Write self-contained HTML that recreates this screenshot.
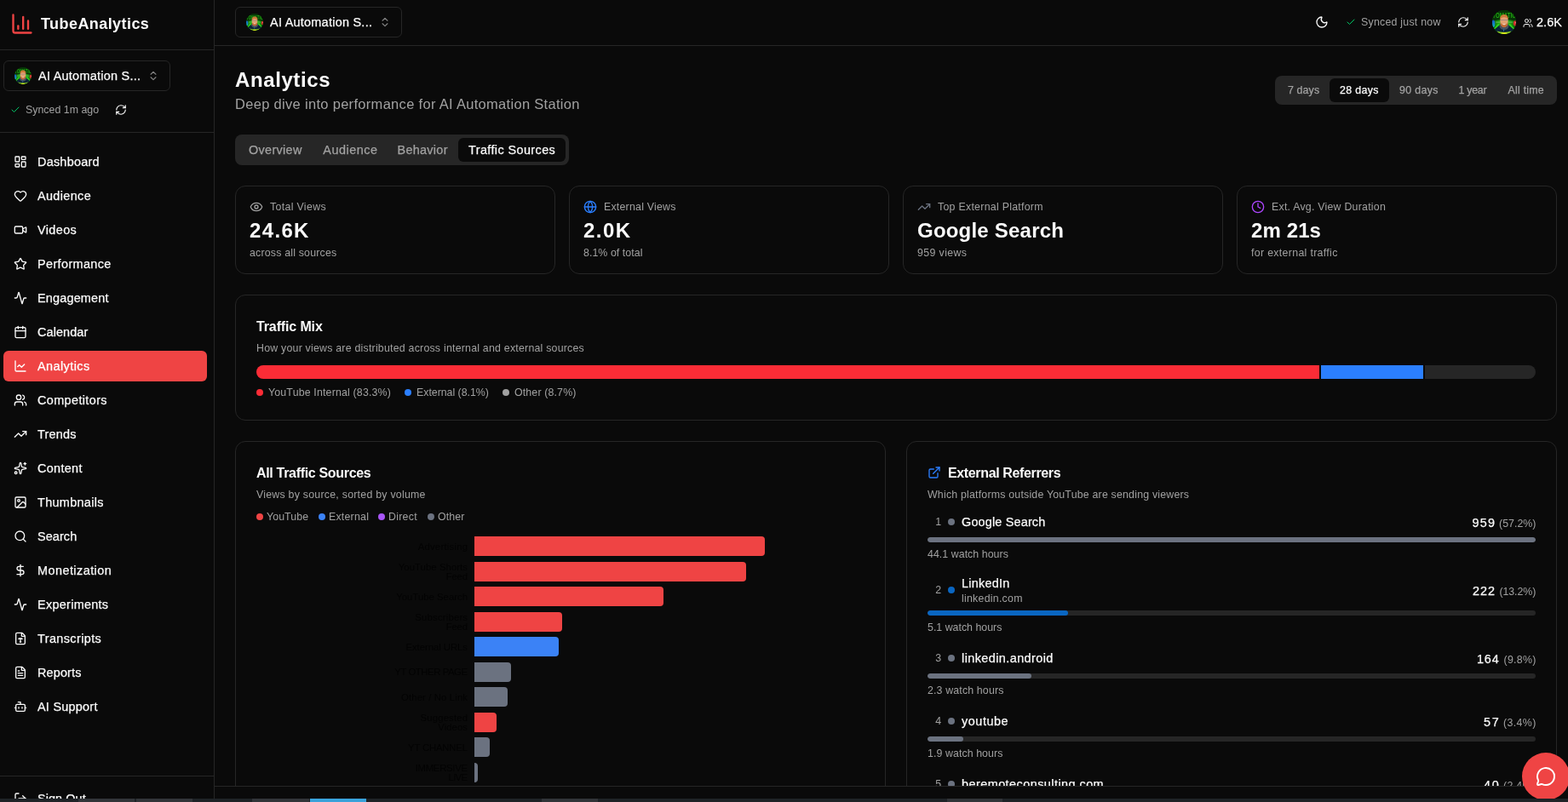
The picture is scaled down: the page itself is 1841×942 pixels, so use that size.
<!DOCTYPE html>
<html lang="en">
<head>
<meta charset="utf-8">
<title>TubeAnalytics – Analytics</title>
<meta name="viewport" content="width=1841">
<style>
*{margin:0;padding:0;box-sizing:border-box}
html,body{width:1841px;height:942px;overflow:hidden;background:#0a0a0a}
body{font-family:"Liberation Sans",Arial,sans-serif;color:#fafafa}
.app,.app *{position:absolute}
.app{overflow:hidden;will-change:transform}
.t{white-space:nowrap;line-height:1;font-weight:400;background:none;border:0;font-family:inherit}
h1.t,h2.t,h3.t{font-weight:700}
.btn{color:inherit;cursor:pointer}
.i{display:block;overflow:visible}
a{color:inherit;text-decoration:none}
button{font-family:inherit;color:inherit;background:none;border:0}
.select{border:1px solid #262626;border-radius:6px;background:#0a0a0a}
.navitem{border-radius:6px}
.navitem.active{background:#ef4444}
.seg{background:#262626;border-radius:8px}
.card{border:1px solid #262626;border-radius:12px;background:#0a0a0a}
.mixbar{border-radius:8px;overflow:hidden}
.track{background:#262626;border-radius:3px;overflow:hidden}
.fab{background:#ef4444;border-radius:50%}
.strip{background:#1f2327}
</style>
</head>
<body>
<div class="app" style="left:0px;top:0px;width:1841px;height:942px;">
 <aside class="sidebar" style="left:0px;top:0px;width:252px;height:938px;">
  <div class="a" style="left:251px;top:0px;width:1px;height:938px;background:#262626;"></div>
  <div class="brand" style="left:0px;top:0px;width:251px;height:59px;">
   <div class="a" style="left:0px;top:58px;width:251px;height:1px;background:#262626;"></div>
   <svg class="i" width="28" height="28" viewBox="0 0 24 24" fill="none" stroke="#ef4444" stroke-width="2" stroke-linecap="round" stroke-linejoin="round" style="left:12px;top:14px;"><path d="M3 3v16a2 2 0 0 0 2 2h16"/><path d="M18 17V9"/><path d="M13 17V5"/><path d="M8 17v-3"/></svg>
   <h1 class="t" style="top:19px;font-size:18px;left:48px;font-weight:700;letter-spacing:0.43px;">TubeAnalytics</h1>
  </div>
  <div class="channel" style="left:0px;top:59px;width:251px;height:97px;">
   <div class="a" style="left:0px;top:96px;width:251px;height:1px;background:#262626;"></div>
   <button class="select" style="left:4px;top:12px;width:196px;height:36px;">
    <svg class="i" width="20" height="20" viewBox="0 0 28 28" style="left:12px;top:7px;" role="img" aria-label="AI Automation Station"><defs><clipPath id="av1"><circle cx="14" cy="14" r="14"/></clipPath><radialGradient id="ag1" cx="50%" cy="58%" r="62%"><stop offset="0" stop-color="#35d61c"/><stop offset="0.45" stop-color="#1c9a10"/><stop offset="0.8" stop-color="#0c5a08"/><stop offset="1" stop-color="#063405"/></radialGradient><linearGradient id="ab1" x1="0" y1="0" x2="0" y2="1"><stop offset="0" stop-color="#1450c8"/><stop offset="1" stop-color="#12b4c8"/></linearGradient></defs><g clip-path="url(#av1)"><rect width="28" height="28" fill="url(#ag1)"/><path d="M0 0h28v12.500Q14 9.500 0 12.500Z" fill="#073407"/><text x="14" y="9.200" text-anchor="middle" font-family="Liberation Sans, Arial, sans-serif" font-weight="700" font-size="6.400" textLength="27.500" lengthAdjust="spacingAndGlyphs" fill="#22a812" transform="translate(0 -4.600) scale(1 1.500)">TOMATIC</text><path d="M4.200 14.100h5M19 14.100h5.200" stroke="#a4d3a0" stroke-width="1" opacity="0.550"/><path d="M7 15.800 L2 21.600 L3.600 22.600 L8.800 17Z" fill="#2fd41e"/><path d="M21 15.800 L26 21.600 L24.400 22.600 L19.200 17Z" fill="#2fd41e"/><ellipse cx="1.200" cy="15.700" rx="2.100" ry="4.200" fill="url(#ab1)"/><ellipse cx="27" cy="15.300" rx="2.200" ry="3.100" fill="#d42e2c"/><circle cx="27.300" cy="14.800" r="0.600" fill="#f6c8c8"/><path d="M9.500 17 L3 22.300 L4 25.500 Q14 28.500 24 25.500 L25 22.300 L18.500 17Z" fill="#0a2338"/><path d="M8.500 19 Q8.700 16.400 10.300 16 L17.700 16 Q19.300 16.400 19.500 19 Q18.500 23 14 23 Q9.500 23 8.500 19Z" fill="#4a525c"/><ellipse cx="14" cy="12.700" rx="4.700" ry="7.300" fill="#e2a273"/><path d="M9.200 11.500 Q8.800 4.800 14 5 Q19.200 4.800 18.800 11.500 Q17.800 8.200 14 8.300 Q10.200 8.200 9.200 11.500Z" fill="#cf7a3a"/><path d="M9.500 14.500 Q9.800 20 14 20.200 Q18.200 20 18.500 14.500 Q16.600 17.200 14 17.200 Q11.400 17.200 9.500 14.500Z" fill="#c26a34"/><path d="M9.500 11.400h9" stroke="#6a6f8a" stroke-width="0.700" opacity="0.800"/><ellipse cx="14" cy="16.500" rx="1.500" ry="0.800" fill="#eed2c4"/><path d="M13.500 21.500v3.500" stroke="#2d6690" stroke-width="1"/><path d="M5.500 24.600 Q14 27.300 22.500 24.600 Q21 28.500 14 28.500 Q7 28.500 5.500 24.600Z" fill="#8fcc1e"/><ellipse cx="14" cy="27" rx="3.500" ry="0.900" fill="#dfe81c"/></g></svg>
    <span class="t" style="top:10px;font-size:14.42px;left:40px;-webkit-text-stroke:0.25px;letter-spacing:0.28px;">AI Automation S...</span>
    <svg class="i" width="14" height="14" viewBox="0 0 24 24" fill="none" stroke="#fafafa" stroke-width="2" stroke-linecap="round" stroke-linejoin="round" style="left:168px;top:10px;opacity:0.5;"><path d="m7 15 5 5 5-5"/><path d="m7 9 5-5 5 5"/></svg>
   </button>
   <svg class="i" width="12" height="12" viewBox="0 0 24 24" fill="none" stroke="#00c86a" stroke-width="2" stroke-linecap="round" stroke-linejoin="round" style="left:12px;top:64px;"><path d="M20 6 9 17l-5-5"/></svg>
   <span class="t" style="top:64px;font-size:12.36px;left:30px;color:#a1a1a1;letter-spacing:0.02px;">Synced 1m ago</span>
   <svg class="i" width="14" height="14" viewBox="0 0 24 24" fill="none" stroke="#fafafa" stroke-width="2" stroke-linecap="round" stroke-linejoin="round" style="left:135px;top:63px;"><path d="M3 12a9 9 0 0 1 9-9 9.75 9.75 0 0 1 6.74 2.74L21 8"/><path d="M21 3v5h-5"/><path d="M21 12a9 9 0 0 1-9 9 9.75 9.75 0 0 1-6.74-2.74L3 16"/><path d="M8 16H3v5"/></svg>
  </div>
  <nav class="nav" style="left:0px;top:156px;width:251px;height:755px;">
   <a class="navitem" style="left:4px;top:16px;width:239px;height:36px;">
    <svg class="i" width="16" height="16" viewBox="0 0 24 24" fill="none" stroke="#fafafa" stroke-width="2" stroke-linecap="round" stroke-linejoin="round" style="left:12px;top:10px;"><rect width="7" height="9" x="3" y="3" rx="1"/><rect width="7" height="5" x="14" y="3" rx="1"/><rect width="7" height="9" x="14" y="12" rx="1"/><rect width="7" height="5" x="3" y="16" rx="1"/></svg>
    <span class="t" style="top:11px;font-size:14.42px;left:40px;-webkit-text-stroke:0.25px;letter-spacing:0.25px;">Dashboard</span>
   </a>
   <a class="navitem" style="left:4px;top:56px;width:239px;height:36px;">
    <svg class="i" width="16" height="16" viewBox="0 0 24 24" fill="none" stroke="#fafafa" stroke-width="2" stroke-linecap="round" stroke-linejoin="round" style="left:12px;top:10px;"><path d="M2 9.500a5.500 5.500 0 0 1 9.591-3.676.560.560 0 0 0 .818 0A5.490 5.490 0 0 1 22 9.500c0 2.290-1.500 4-3 5.500l-5.492 5.313a2 2 0 0 1-3 .019L5 15c-1.500-1.500-3-3.200-3-5.500"/></svg>
    <span class="t" style="top:11px;font-size:14.42px;left:40px;-webkit-text-stroke:0.25px;letter-spacing:0.37px;">Audience</span>
   </a>
   <a class="navitem" style="left:4px;top:96px;width:239px;height:36px;">
    <svg class="i" width="16" height="16" viewBox="0 0 24 24" fill="none" stroke="#fafafa" stroke-width="2" stroke-linecap="round" stroke-linejoin="round" style="left:12px;top:10px;"><path d="m16 13 5.223 3.482a.5.5 0 0 0 .777-.416V7.870a.5.5 0 0 0-.752-.432L16 10.500"/><rect x="2" y="6" width="14" height="12" rx="2"/></svg>
    <span class="t" style="top:11px;font-size:14.42px;left:40px;-webkit-text-stroke:0.25px;letter-spacing:0.39px;">Videos</span>
   </a>
   <a class="navitem" style="left:4px;top:136px;width:239px;height:36px;">
    <svg class="i" width="16" height="16" viewBox="0 0 24 24" fill="none" stroke="#fafafa" stroke-width="2" stroke-linecap="round" stroke-linejoin="round" style="left:12px;top:10px;"><path d="M11.525 2.295a.53.53 0 0 1 .95 0l2.310 4.679a2.123 2.123 0 0 0 1.595 1.160l5.166.756a.53.53 0 0 1 .294.904l-3.736 3.638a2.123 2.123 0 0 0-.611 1.878l.882 5.140a.53.53 0 0 1-.771.560l-4.618-2.428a2.122 2.122 0 0 0-1.973 0L6.396 21.010a.53.53 0 0 1-.770-.560l.881-5.139a2.122 2.122 0 0 0-.611-1.879L2.160 9.795a.53.53 0 0 1 .294-.906l5.165-.755a2.122 2.122 0 0 0 1.597-1.160z"/></svg>
    <span class="t" style="top:11px;font-size:14.42px;left:40px;-webkit-text-stroke:0.25px;letter-spacing:0.39px;">Performance</span>
   </a>
   <a class="navitem" style="left:4px;top:176px;width:239px;height:36px;">
    <svg class="i" width="16" height="16" viewBox="0 0 24 24" fill="none" stroke="#fafafa" stroke-width="2" stroke-linecap="round" stroke-linejoin="round" style="left:12px;top:10px;"><path d="M22 12h-2.480a2 2 0 0 0-1.930 1.460l-2.350 8.360a.25.25 0 0 1-.480 0L9.240 2.180a.25.25 0 0 0-.480 0l-2.350 8.360A2 2 0 0 1 4.490 12H2"/></svg>
    <span class="t" style="top:11px;font-size:14.42px;left:40px;-webkit-text-stroke:0.25px;letter-spacing:0.2px;">Engagement</span>
   </a>
   <a class="navitem" style="left:4px;top:216px;width:239px;height:36px;">
    <svg class="i" width="16" height="16" viewBox="0 0 24 24" fill="none" stroke="#fafafa" stroke-width="2" stroke-linecap="round" stroke-linejoin="round" style="left:12px;top:10px;"><path d="M8 2v4"/><path d="M16 2v4"/><rect width="18" height="18" x="3" y="4" rx="2"/><path d="M3 10h18"/></svg>
    <span class="t" style="top:11px;font-size:14.42px;left:40px;-webkit-text-stroke:0.25px;letter-spacing:0.11px;">Calendar</span>
   </a>
   <a class="navitem active" style="left:4px;top:256px;width:239px;height:36px;">
    <svg class="i" width="16" height="16" viewBox="0 0 24 24" fill="none" stroke="#ffffff" stroke-width="2" stroke-linecap="round" stroke-linejoin="round" style="left:12px;top:10px;"><path d="M3 3v16a2 2 0 0 0 2 2h16"/><path d="m19 9-5 5-4-4-3 3"/></svg>
    <span class="t" style="top:11px;font-size:14.42px;left:40px;-webkit-text-stroke:0.25px;color:#ffffff;letter-spacing:0.44px;">Analytics</span>
   </a>
   <a class="navitem" style="left:4px;top:296px;width:239px;height:36px;">
    <svg class="i" width="16" height="16" viewBox="0 0 24 24" fill="none" stroke="#fafafa" stroke-width="2" stroke-linecap="round" stroke-linejoin="round" style="left:12px;top:10px;"><path d="M16 21v-2a4 4 0 0 0-4-4H6a4 4 0 0 0-4 4v2"/><path d="M16 3.128a4 4 0 0 1 0 7.744"/><path d="M22 21v-2a4 4 0 0 0-3-3.870"/><circle cx="9" cy="7" r="4"/></svg>
    <span class="t" style="top:11px;font-size:14.42px;left:40px;-webkit-text-stroke:0.25px;letter-spacing:0.39px;">Competitors</span>
   </a>
   <a class="navitem" style="left:4px;top:336px;width:239px;height:36px;">
    <svg class="i" width="16" height="16" viewBox="0 0 24 24" fill="none" stroke="#fafafa" stroke-width="2" stroke-linecap="round" stroke-linejoin="round" style="left:12px;top:10px;"><polyline points="22 7 13.500 15.500 8.500 10.500 2 17"/><polyline points="16 7 22 7 22 13"/></svg>
    <span class="t" style="top:11px;font-size:14.42px;left:40px;-webkit-text-stroke:0.25px;letter-spacing:0.23px;">Trends</span>
   </a>
   <a class="navitem" style="left:4px;top:376px;width:239px;height:36px;">
    <svg class="i" width="16" height="16" viewBox="0 0 24 24" fill="none" stroke="#fafafa" stroke-width="2" stroke-linecap="round" stroke-linejoin="round" style="left:12px;top:10px;"><path d="M11.017 2.814a1 1 0 0 1 1.966 0l1.051 5.558a2 2 0 0 0 1.594 1.594l5.558 1.051a1 1 0 0 1 0 1.966l-5.558 1.051a2 2 0 0 0-1.594 1.594l-1.051 5.558a1 1 0 0 1-1.966 0l-1.051-5.558a2 2 0 0 0-1.594-1.594l-5.558-1.051a1 1 0 0 1 0-1.966l5.558-1.051a2 2 0 0 0 1.594-1.594z"/><path d="M20 2v4"/><path d="M22 4h-4"/><circle cx="4" cy="20" r="2"/></svg>
    <span class="t" style="top:11px;font-size:14.42px;left:40px;-webkit-text-stroke:0.25px;letter-spacing:0.33px;">Content</span>
   </a>
   <a class="navitem" style="left:4px;top:416px;width:239px;height:36px;">
    <svg class="i" width="16" height="16" viewBox="0 0 24 24" fill="none" stroke="#fafafa" stroke-width="2" stroke-linecap="round" stroke-linejoin="round" style="left:12px;top:10px;"><rect width="18" height="18" x="3" y="3" rx="2" ry="2"/><circle cx="9" cy="9" r="2"/><path d="m21 15-3.086-3.086a2 2 0 0 0-2.828 0L6 21"/></svg>
    <span class="t" style="top:11px;font-size:14.42px;left:40px;-webkit-text-stroke:0.25px;letter-spacing:0.33px;">Thumbnails</span>
   </a>
   <a class="navitem" style="left:4px;top:456px;width:239px;height:36px;">
    <svg class="i" width="16" height="16" viewBox="0 0 24 24" fill="none" stroke="#fafafa" stroke-width="2" stroke-linecap="round" stroke-linejoin="round" style="left:12px;top:10px;"><circle cx="11" cy="11" r="8"/><path d="m21 21-4.300-4.300"/></svg>
    <span class="t" style="top:11px;font-size:14.42px;left:40px;-webkit-text-stroke:0.25px;letter-spacing:0.11px;">Search</span>
   </a>
   <a class="navitem" style="left:4px;top:496px;width:239px;height:36px;">
    <svg class="i" width="16" height="16" viewBox="0 0 24 24" fill="none" stroke="#fafafa" stroke-width="2" stroke-linecap="round" stroke-linejoin="round" style="left:12px;top:10px;"><line x1="12" x2="12" y1="2" y2="22"/><path d="M17 5H9.500a3.500 3.500 0 0 0 0 7h5a3.500 3.500 0 0 1 0 7H6"/></svg>
    <span class="t" style="top:11px;font-size:14.42px;left:40px;-webkit-text-stroke:0.25px;letter-spacing:0.46px;">Monetization</span>
   </a>
   <a class="navitem" style="left:4px;top:536px;width:239px;height:36px;">
    <svg class="i" width="16" height="16" viewBox="0 0 24 24" fill="none" stroke="#fafafa" stroke-width="2" stroke-linecap="round" stroke-linejoin="round" style="left:12px;top:10px;"><path d="M22 12h-2.480a2 2 0 0 0-1.930 1.460l-2.350 8.360a.25.25 0 0 1-.480 0L9.240 2.180a.25.25 0 0 0-.480 0l-2.350 8.360A2 2 0 0 1 4.490 12H2"/></svg>
    <span class="t" style="top:11px;font-size:14.42px;left:40px;-webkit-text-stroke:0.25px;letter-spacing:0.3px;">Experiments</span>
   </a>
   <a class="navitem" style="left:4px;top:576px;width:239px;height:36px;">
    <svg class="i" width="16" height="16" viewBox="0 0 24 24" fill="none" stroke="#fafafa" stroke-width="2" stroke-linecap="round" stroke-linejoin="round" style="left:12px;top:10px;"><path d="M6 22a2 2 0 0 1-2-2V4a2 2 0 0 1 2-2h8a2.400 2.400 0 0 1 1.704.706l3.588 3.588A2.400 2.400 0 0 1 20 8v12a2 2 0 0 1-2 2z"/><path d="M14 2v5a1 1 0 0 0 1 1h5"/><path d="M11 18h2"/><path d="M12 12v6"/><path d="M9 13v-.500a.500.500 0 0 1 .500-.500h5a.500.500 0 0 1 .500.500v.500"/></svg>
    <span class="t" style="top:11px;font-size:14.42px;left:40px;-webkit-text-stroke:0.25px;letter-spacing:0.41px;">Transcripts</span>
   </a>
   <a class="navitem" style="left:4px;top:616px;width:239px;height:36px;">
    <svg class="i" width="16" height="16" viewBox="0 0 24 24" fill="none" stroke="#fafafa" stroke-width="2" stroke-linecap="round" stroke-linejoin="round" style="left:12px;top:10px;"><path d="M6 22a2 2 0 0 1-2-2V4a2 2 0 0 1 2-2h8a2.400 2.400 0 0 1 1.704.706l3.588 3.588A2.400 2.400 0 0 1 20 8v12a2 2 0 0 1-2 2z"/><path d="M14 2v5a1 1 0 0 0 1 1h5"/><path d="M10 9H8"/><path d="M16 13H8"/><path d="M16 17H8"/></svg>
    <span class="t" style="top:11px;font-size:14.42px;left:40px;-webkit-text-stroke:0.25px;letter-spacing:0.17px;">Reports</span>
   </a>
   <a class="navitem" style="left:4px;top:656px;width:239px;height:36px;">
    <svg class="i" width="16" height="16" viewBox="0 0 24 24" fill="none" stroke="#fafafa" stroke-width="2" stroke-linecap="round" stroke-linejoin="round" style="left:12px;top:10px;"><path d="M12 8V4H8"/><rect width="16" height="12" x="4" y="8" rx="2"/><path d="M2 14h2"/><path d="M20 14h2"/><path d="M15 13v2"/><path d="M9 13v2"/></svg>
    <span class="t" style="top:11px;font-size:14.42px;left:40px;-webkit-text-stroke:0.25px;letter-spacing:0.26px;">AI Support</span>
   </a>
  </nav>
  <div class="sidefoot" style="left:0px;top:911px;width:251px;height:27px;overflow:hidden;">
   <div class="a" style="left:0px;top:0px;width:251px;height:1px;background:#262626;"></div>
   <a class="navitem" style="left:4px;top:9px;width:239px;height:36px;">
    <svg class="i" width="16" height="16" viewBox="0 0 24 24" fill="none" stroke="#fafafa" stroke-width="2" stroke-linecap="round" stroke-linejoin="round" style="left:12px;top:10px;"><path d="M9 21H5a2 2 0 0 1-2-2V5a2 2 0 0 1 2-2h4"/><polyline points="16 17 21 12 16 7"/><line x1="21" x2="9" y1="12" y2="12"/></svg>
    <span class="t" style="top:11px;font-size:14.42px;left:40px;-webkit-text-stroke:0.25px;letter-spacing:0.09px;">Sign Out</span>
   </a>
  </div>
 </aside>
 <header class="topbar" style="left:252px;top:0px;width:1589px;height:54px;">
  <div class="a" style="left:0px;top:53px;width:1589px;height:1px;background:#262626;"></div>
  <button class="select" style="left:24px;top:8px;width:196px;height:36px;">
   <svg class="i" width="20" height="20" viewBox="0 0 28 28" style="left:12px;top:7px;" role="img" aria-label="AI Automation Station"><defs><clipPath id="av2"><circle cx="14" cy="14" r="14"/></clipPath><radialGradient id="ag2" cx="50%" cy="58%" r="62%"><stop offset="0" stop-color="#35d61c"/><stop offset="0.45" stop-color="#1c9a10"/><stop offset="0.8" stop-color="#0c5a08"/><stop offset="1" stop-color="#063405"/></radialGradient><linearGradient id="ab2" x1="0" y1="0" x2="0" y2="1"><stop offset="0" stop-color="#1450c8"/><stop offset="1" stop-color="#12b4c8"/></linearGradient></defs><g clip-path="url(#av2)"><rect width="28" height="28" fill="url(#ag2)"/><path d="M0 0h28v12.500Q14 9.500 0 12.500Z" fill="#073407"/><text x="14" y="9.200" text-anchor="middle" font-family="Liberation Sans, Arial, sans-serif" font-weight="700" font-size="6.400" textLength="27.500" lengthAdjust="spacingAndGlyphs" fill="#22a812" transform="translate(0 -4.600) scale(1 1.500)">TOMATIC</text><path d="M4.200 14.100h5M19 14.100h5.200" stroke="#a4d3a0" stroke-width="1" opacity="0.550"/><path d="M7 15.800 L2 21.600 L3.600 22.600 L8.800 17Z" fill="#2fd41e"/><path d="M21 15.800 L26 21.600 L24.400 22.600 L19.200 17Z" fill="#2fd41e"/><ellipse cx="1.200" cy="15.700" rx="2.100" ry="4.200" fill="url(#ab2)"/><ellipse cx="27" cy="15.300" rx="2.200" ry="3.100" fill="#d42e2c"/><circle cx="27.300" cy="14.800" r="0.600" fill="#f6c8c8"/><path d="M9.500 17 L3 22.300 L4 25.500 Q14 28.500 24 25.500 L25 22.300 L18.500 17Z" fill="#0a2338"/><path d="M8.500 19 Q8.700 16.400 10.300 16 L17.700 16 Q19.300 16.400 19.500 19 Q18.500 23 14 23 Q9.500 23 8.500 19Z" fill="#4a525c"/><ellipse cx="14" cy="12.700" rx="4.700" ry="7.300" fill="#e2a273"/><path d="M9.200 11.500 Q8.800 4.800 14 5 Q19.200 4.800 18.800 11.500 Q17.800 8.200 14 8.300 Q10.200 8.200 9.200 11.500Z" fill="#cf7a3a"/><path d="M9.500 14.500 Q9.800 20 14 20.200 Q18.200 20 18.500 14.500 Q16.600 17.200 14 17.200 Q11.400 17.200 9.500 14.500Z" fill="#c26a34"/><path d="M9.500 11.400h9" stroke="#6a6f8a" stroke-width="0.700" opacity="0.800"/><ellipse cx="14" cy="16.500" rx="1.500" ry="0.800" fill="#eed2c4"/><path d="M13.500 21.500v3.500" stroke="#2d6690" stroke-width="1"/><path d="M5.500 24.600 Q14 27.300 22.500 24.600 Q21 28.500 14 28.500 Q7 28.500 5.500 24.600Z" fill="#8fcc1e"/><ellipse cx="14" cy="27" rx="3.500" ry="0.900" fill="#dfe81c"/></g></svg>
   <span class="t" style="top:10px;font-size:14.42px;left:40px;-webkit-text-stroke:0.25px;letter-spacing:0.27px;">AI Automation S...</span>
   <svg class="i" width="14" height="14" viewBox="0 0 24 24" fill="none" stroke="#fafafa" stroke-width="2" stroke-linecap="round" stroke-linejoin="round" style="left:168px;top:10px;opacity:0.5;"><path d="m7 15 5 5 5-5"/><path d="m7 9 5-5 5 5"/></svg>
  </button>
  <svg class="i" width="16" height="16" viewBox="0 0 24 24" fill="none" stroke="#fafafa" stroke-width="2" stroke-linecap="round" stroke-linejoin="round" style="left:1292px;top:18px;"><path d="M20.985 12.486a9 9 0 1 1-9.473-9.472c.405-.022.617.460.402.803a6 6 0 0 0 8.268 8.268c.344-.215.825-.004.803.401"/></svg>
  <svg class="i" width="12" height="12" viewBox="0 0 24 24" fill="none" stroke="#00c86a" stroke-width="2" stroke-linecap="round" stroke-linejoin="round" style="left:1328px;top:20px;"><path d="M20 6 9 17l-5-5"/></svg>
  <span class="t" style="top:20px;font-size:12.36px;left:1346px;color:#a1a1a1;letter-spacing:0.24px;">Synced just now</span>
  <svg class="i" width="14" height="14" viewBox="0 0 24 24" fill="none" stroke="#fafafa" stroke-width="2" stroke-linecap="round" stroke-linejoin="round" style="left:1459px;top:19px;"><path d="M3 12a9 9 0 0 1 9-9 9.75 9.75 0 0 1 6.74 2.74L21 8"/><path d="M21 3v5h-5"/><path d="M21 12a9 9 0 0 1-9 9 9.75 9.75 0 0 1-6.74-2.74L3 16"/><path d="M8 16H3v5"/></svg>
  <svg class="i" width="28" height="28" viewBox="0 0 28 28" style="left:1500px;top:12px;" role="img" aria-label="AI Automation Station"><defs><clipPath id="av3"><circle cx="14" cy="14" r="14"/></clipPath><radialGradient id="ag3" cx="50%" cy="58%" r="62%"><stop offset="0" stop-color="#35d61c"/><stop offset="0.45" stop-color="#1c9a10"/><stop offset="0.8" stop-color="#0c5a08"/><stop offset="1" stop-color="#063405"/></radialGradient><linearGradient id="ab3" x1="0" y1="0" x2="0" y2="1"><stop offset="0" stop-color="#1450c8"/><stop offset="1" stop-color="#12b4c8"/></linearGradient></defs><g clip-path="url(#av3)"><rect width="28" height="28" fill="url(#ag3)"/><path d="M0 0h28v12.500Q14 9.500 0 12.500Z" fill="#073407"/><text x="14" y="9.200" text-anchor="middle" font-family="Liberation Sans, Arial, sans-serif" font-weight="700" font-size="6.400" textLength="27.500" lengthAdjust="spacingAndGlyphs" fill="#22a812" transform="translate(0 -4.600) scale(1 1.500)">TOMATIC</text><path d="M4.200 14.100h5M19 14.100h5.200" stroke="#a4d3a0" stroke-width="1" opacity="0.550"/><path d="M7 15.800 L2 21.600 L3.600 22.600 L8.800 17Z" fill="#2fd41e"/><path d="M21 15.800 L26 21.600 L24.400 22.600 L19.200 17Z" fill="#2fd41e"/><ellipse cx="1.200" cy="15.700" rx="2.100" ry="4.200" fill="url(#ab3)"/><ellipse cx="27" cy="15.300" rx="2.200" ry="3.100" fill="#d42e2c"/><circle cx="27.300" cy="14.800" r="0.600" fill="#f6c8c8"/><path d="M9.500 17 L3 22.300 L4 25.500 Q14 28.500 24 25.500 L25 22.300 L18.500 17Z" fill="#0a2338"/><path d="M8.500 19 Q8.700 16.400 10.300 16 L17.700 16 Q19.300 16.400 19.500 19 Q18.500 23 14 23 Q9.500 23 8.500 19Z" fill="#4a525c"/><ellipse cx="14" cy="12.700" rx="4.700" ry="7.300" fill="#e2a273"/><path d="M9.200 11.500 Q8.800 4.800 14 5 Q19.200 4.800 18.800 11.500 Q17.800 8.200 14 8.300 Q10.200 8.200 9.200 11.500Z" fill="#cf7a3a"/><path d="M9.500 14.500 Q9.800 20 14 20.200 Q18.200 20 18.500 14.500 Q16.600 17.200 14 17.200 Q11.400 17.200 9.500 14.500Z" fill="#c26a34"/><path d="M9.500 11.400h9" stroke="#6a6f8a" stroke-width="0.700" opacity="0.800"/><ellipse cx="14" cy="16.500" rx="1.500" ry="0.800" fill="#eed2c4"/><path d="M13.500 21.500v3.500" stroke="#2d6690" stroke-width="1"/><path d="M5.500 24.600 Q14 27.300 22.500 24.600 Q21 28.500 14 28.500 Q7 28.500 5.500 24.600Z" fill="#8fcc1e"/><ellipse cx="14" cy="27" rx="3.500" ry="0.900" fill="#dfe81c"/></g></svg>
  <svg class="i" width="12" height="12" viewBox="0 0 24 24" fill="none" stroke="#fafafa" stroke-width="2" stroke-linecap="round" stroke-linejoin="round" style="left:1536px;top:20.5px;"><path d="M16 21v-2a4 4 0 0 0-4-4H6a4 4 0 0 0-4 4v2"/><path d="M16 3.128a4 4 0 0 1 0 7.744"/><path d="M22 21v-2a4 4 0 0 0-3-3.870"/><circle cx="9" cy="7" r="4"/></svg>
  <span class="t" style="top:19px;font-size:14.42px;left:1552px;-webkit-text-stroke:0.25px;letter-spacing:0.11px;">2.6K</span>
 </header>
 <main class="main" style="left:252px;top:54px;width:1589px;height:869px;overflow:hidden;">
  <h2 class="t" style="top:28px;font-size:24px;left:24px;font-weight:700;letter-spacing:0.6px;">Analytics</h2>
  <p class="t" style="top:60px;font-size:16.48px;left:24px;color:#a1a1a1;letter-spacing:0.32px;">Deep dive into performance for AI Automation Station</p>
  <div class="seg" style="left:1245px;top:35px;width:331px;height:34px;">
   <div class="a" style="left:64px;top:3px;width:70px;height:28px;background:#0a0a0a;border-radius:6px;"></div>
   <button class="t btn" style="top:11px;font-size:12.36px;left:15px;-webkit-text-stroke:0.25px;color:#a1a1a1;letter-spacing:0.14px;">7 days</button>
   <button class="t btn" style="top:11px;font-size:12.36px;left:76px;-webkit-text-stroke:0.25px;letter-spacing:0.37px;">28 days</button>
   <button class="t btn" style="top:11px;font-size:12.36px;left:146px;-webkit-text-stroke:0.25px;color:#a1a1a1;letter-spacing:0.34px;">90 days</button>
   <button class="t btn" style="top:11px;font-size:12.36px;left:215.5px;-webkit-text-stroke:0.25px;color:#a1a1a1;letter-spacing:-0.27px;">1 year</button>
   <button class="t btn" style="top:11px;font-size:12.36px;left:273.5px;-webkit-text-stroke:0.25px;color:#a1a1a1;letter-spacing:0.24px;">All time</button>
  </div>
  <div class="seg" style="left:24px;top:104px;width:392px;height:36px;">
   <div class="a" style="left:262px;top:4px;width:126px;height:28px;background:#0a0a0a;border-radius:6px;"></div>
   <button class="t btn" style="top:11px;font-size:14.42px;left:16px;-webkit-text-stroke:0.25px;color:#a1a1a1;letter-spacing:0.33px;">Overview</button>
   <button class="t btn" style="top:11px;font-size:14.42px;left:103.3px;-webkit-text-stroke:0.25px;color:#a1a1a1;letter-spacing:0.51px;">Audience</button>
   <button class="t btn" style="top:11px;font-size:14.42px;left:190.5px;-webkit-text-stroke:0.25px;color:#a1a1a1;letter-spacing:0.3px;">Behavior</button>
   <button class="t btn" style="top:11px;font-size:14.42px;left:274px;-webkit-text-stroke:0.25px;letter-spacing:0.41px;">Traffic Sources</button>
  </div>
  <section class="card" style="left:24px;top:164px;width:376px;height:104px;">
   <svg class="i" width="16" height="16" viewBox="0 0 24 24" fill="none" stroke="#a1a1a1" stroke-width="2" stroke-linecap="round" stroke-linejoin="round" style="left:16px;top:16px;"><path d="M2.062 12.348a1 1 0 0 1 0-.696 10.750 10.750 0 0 1 19.876 0 1 1 0 0 1 0 .696 10.750 10.750 0 0 1-19.876 0"/><circle cx="12" cy="12" r="3"/></svg>
   <span class="t" style="top:18px;font-size:12.36px;left:40px;color:#a1a1a1;letter-spacing:0.33px;">Total Views</span>
   <div class="t" style="top:40px;font-size:24px;left:16px;font-weight:700;letter-spacing:1.35px;">24.6K</div>
   <span class="t" style="top:72px;font-size:12.36px;left:16px;color:#a1a1a1;letter-spacing:0.19px;">across all sources</span>
  </section>
  <section class="card" style="left:416px;top:164px;width:376px;height:104px;">
   <svg class="i" width="16" height="16" viewBox="0 0 24 24" fill="none" stroke="#2b7fff" stroke-width="2" stroke-linecap="round" stroke-linejoin="round" style="left:16px;top:16px;"><circle cx="12" cy="12" r="10"/><path d="M12 2a14.500 14.500 0 0 0 0 20 14.500 14.500 0 0 0 0-20"/><path d="M2 12h20"/></svg>
   <span class="t" style="top:18px;font-size:12.36px;left:40px;color:#a1a1a1;letter-spacing:0.22px;">External Views</span>
   <div class="t" style="top:40px;font-size:24px;left:16px;font-weight:700;letter-spacing:1.49px;">2.0K</div>
   <span class="t" style="top:72px;font-size:12.36px;left:16px;color:#a1a1a1;letter-spacing:0.06px;">8.1% of total</span>
  </section>
  <section class="card" style="left:808px;top:164px;width:376px;height:104px;">
   <svg class="i" width="16" height="16" viewBox="0 0 24 24" fill="none" stroke="#6b7280" stroke-width="2" stroke-linecap="round" stroke-linejoin="round" style="left:16px;top:16px;"><polyline points="22 7 13.500 15.500 8.500 10.500 2 17"/><polyline points="16 7 22 7 22 13"/></svg>
   <span class="t" style="top:18px;font-size:12.36px;left:40px;color:#a1a1a1;letter-spacing:0.27px;">Top External Platform</span>
   <div class="t" style="top:40px;font-size:24px;left:16px;font-weight:700;letter-spacing:0.21px;">Google Search</div>
   <span class="t" style="top:72px;font-size:12.36px;left:16px;color:#a1a1a1;letter-spacing:0.38px;">959 views</span>
  </section>
  <section class="card" style="left:1200px;top:164px;width:376px;height:104px;">
   <svg class="i" width="16" height="16" viewBox="0 0 24 24" fill="none" stroke="#ad46ff" stroke-width="2" stroke-linecap="round" stroke-linejoin="round" style="left:16px;top:16px;"><circle cx="12" cy="12" r="10"/><polyline points="12 6 12 12 16 14"/></svg>
   <span class="t" style="top:18px;font-size:12.36px;left:40px;color:#a1a1a1;letter-spacing:0.23px;">Ext. Avg. View Duration</span>
   <div class="t" style="top:40px;font-size:24px;left:16px;font-weight:700;letter-spacing:0.11px;">2m 21s</div>
   <span class="t" style="top:72px;font-size:12.36px;left:16px;color:#a1a1a1;letter-spacing:0.32px;">for external traffic</span>
  </section>
  <section class="card" style="left:24px;top:292px;width:1552px;height:148px;">
   <h3 class="t" style="top:29px;font-size:16px;left:24px;font-weight:700;letter-spacing:-0.13px;">Traffic Mix</h3>
   <p class="t" style="top:56px;font-size:12.36px;left:24px;color:#a1a1a1;letter-spacing:0.22px;">How your views are distributed across internal and external sources</p>
   <div class="mixbar" style="left:24px;top:82px;width:1502px;height:16px;">
    <div class="a" style="left:0px;top:0px;width:1248px;height:16px;background:#fb2c36;"></div>
    <div class="a" style="left:1250px;top:0px;width:120px;height:16px;background:#2b7fff;"></div>
    <div class="a" style="left:1372px;top:0px;width:130px;height:16px;background:#262626;"></div>
   </div>
   <div class="a" style="left:24px;top:110px;width:8px;height:8px;background:#fb2c36;border-radius:50%;"></div>
   <span class="t" style="top:108px;font-size:12.36px;left:38px;color:#a1a1a1;letter-spacing:0.17px;">YouTube Internal (83.3%)</span>
   <div class="a" style="left:198px;top:110px;width:8px;height:8px;background:#2b7fff;border-radius:50%;"></div>
   <span class="t" style="top:108px;font-size:12.36px;left:212px;color:#a1a1a1;letter-spacing:-0.02px;">External (8.1%)</span>
   <div class="a" style="left:313px;top:110px;width:8px;height:8px;background:#a1a1a1;border-radius:50%;"></div>
   <span class="t" style="top:108px;font-size:12.36px;left:327px;color:#a1a1a1;letter-spacing:0.15px;">Other (8.7%)</span>
  </section>
  <section class="card" style="left:24px;top:464px;width:764px;height:420px;">
   <h3 class="t" style="top:29px;font-size:16px;left:24px;font-weight:700;letter-spacing:-0.32px;">All Traffic Sources</h3>
   <p class="t" style="top:56px;font-size:12.36px;left:24px;color:#a1a1a1;letter-spacing:0.24px;">Views by source, sorted by volume</p>
   <div class="a" style="left:24px;top:84px;width:8px;height:8px;background:#ef4444;border-radius:50%;"></div>
   <span class="t" style="top:82px;font-size:12.36px;left:36px;color:#a1a1a1;letter-spacing:0.08px;">YouTube</span>
   <div class="a" style="left:97px;top:84px;width:8px;height:8px;background:#3b82f6;border-radius:50%;"></div>
   <span class="t" style="top:82px;font-size:12.36px;left:109px;color:#a1a1a1;letter-spacing:0.22px;">External</span>
   <div class="a" style="left:167px;top:84px;width:8px;height:8px;background:#a855f7;border-radius:50%;"></div>
   <span class="t" style="top:82px;font-size:12.36px;left:179px;color:#a1a1a1;letter-spacing:0.27px;">Direct</span>
   <div class="a" style="left:225px;top:84px;width:8px;height:8px;background:#6b7280;border-radius:50%;"></div>
   <span class="t" style="top:82px;font-size:12.36px;left:237px;color:#a1a1a1;letter-spacing:0.09px;">Other</span>
   <div class="chart" style="left:24px;top:106px;width:715px;height:300px;">
    <div class="a" style="left:256px;top:5px;width:341.4px;height:23px;background:#ef4444;border-radius:0 4px 4px 0;"></div>
    <span class="t" style="top:11.75px;font-size:11.33px;right:466.77px;color:#030303;letter-spacing:0.23px;">Advertising</span>
    <div class="a" style="left:256px;top:34.5px;width:319px;height:23px;background:#ef4444;border-radius:0 4px 4px 0;"></div>
    <span class="t" style="top:35.7px;font-size:11.33px;right:466.93px;color:#030303;letter-spacing:0.07px;">YouTube Shorts</span>
    <span class="t" style="top:46.9px;font-size:11.33px;right:467.19px;color:#030303;letter-spacing:-0.19px;">Feed</span>
    <div class="a" style="left:256px;top:64px;width:222px;height:23px;background:#ef4444;border-radius:0 4px 4px 0;"></div>
    <span class="t" style="top:70.75px;font-size:11.33px;right:466.98px;color:#030303;letter-spacing:0.02px;">YouTube Search</span>
    <div class="a" style="left:256px;top:93.5px;width:103px;height:23px;background:#ef4444;border-radius:0 4px 4px 0;"></div>
    <span class="t" style="top:94.7px;font-size:11.33px;right:466.81px;color:#030303;letter-spacing:0.19px;">Subscribers</span>
    <span class="t" style="top:105.9px;font-size:11.33px;right:467.19px;color:#030303;letter-spacing:-0.19px;">Feed</span>
    <div class="a" style="left:256px;top:123px;width:98.8px;height:23px;background:#3b82f6;border-radius:0 4px 4px 0;"></div>
    <span class="t" style="top:129.75px;font-size:11.33px;right:467.04px;color:#030303;letter-spacing:-0.04px;">External URLs</span>
    <div class="a" style="left:256px;top:152.5px;width:42.8px;height:23px;background:#6b7280;border-radius:0 4px 4px 0;"></div>
    <span class="t" style="top:159.25px;font-size:11.33px;right:467.43px;color:#030303;letter-spacing:-0.43px;">YT OTHER PAGE</span>
    <div class="a" style="left:256px;top:182px;width:39px;height:23px;background:#6b7280;border-radius:0 4px 4px 0;"></div>
    <span class="t" style="top:188.75px;font-size:11.33px;right:466.87px;color:#030303;letter-spacing:0.13px;">Other / No Link</span>
    <div class="a" style="left:256px;top:211.5px;width:26.3px;height:23px;background:#ef4444;border-radius:0 4px 4px 0;"></div>
    <span class="t" style="top:212.7px;font-size:11.33px;right:466.84px;color:#030303;letter-spacing:0.16px;">Suggested</span>
    <span class="t" style="top:223.9px;font-size:11.33px;right:466.94px;color:#030303;letter-spacing:0.06px;">Videos</span>
    <div class="a" style="left:256px;top:241px;width:18px;height:23px;background:#6b7280;border-radius:0 4px 4px 0;"></div>
    <span class="t" style="top:247.75px;font-size:11.33px;right:467.18px;color:#030303;letter-spacing:-0.18px;">YT CHANNEL</span>
    <div class="a" style="left:256px;top:270.5px;width:4.3px;height:23px;background:#6b7280;border-radius:0 4px 4px 0;"></div>
    <span class="t" style="top:271.7px;font-size:11.33px;right:467.28px;color:#030303;letter-spacing:-0.28px;">IMMERSIVE</span>
    <span class="t" style="top:282.9px;font-size:11.33px;right:467.7px;color:#030303;letter-spacing:-0.7px;">LIVE</span>
   </div>
  </section>
  <section class="card" style="left:812px;top:464px;width:764px;height:420px;">
   <svg class="i" width="16" height="16" viewBox="0 0 24 24" fill="none" stroke="#2b7fff" stroke-width="2" stroke-linecap="round" stroke-linejoin="round" style="left:24px;top:28px;"><path d="M15 3h6v6"/><path d="M10 14 21 3"/><path d="M18 13v6a2 2 0 0 1-2 2H5a2 2 0 0 1-2-2V8a2 2 0 0 1 2-2h6"/></svg>
   <h3 class="t" style="top:29px;font-size:16px;left:48px;font-weight:700;letter-spacing:-0.36px;">External Referrers</h3>
   <p class="t" style="top:56px;font-size:12.36px;left:24px;color:#a1a1a1;letter-spacing:0.2px;">Which platforms outside YouTube are sending viewers</p>
   <span class="t" style="top:88px;font-size:12.36px;right:722px;color:#a1a1a1;">1</span>
   <div class="a" style="left:48px;top:90px;width:8px;height:8px;background:#6b7280;border-radius:50%;"></div>
   <span class="t" style="top:87px;font-size:14.42px;left:64px;-webkit-text-stroke:0.25px;letter-spacing:0.18px;">Google Search</span>
   <span class="t" style="top:88px;font-size:14.42px;left:663.5px;-webkit-text-stroke:0.25px;letter-spacing:1.21px;">959</span>
   <span class="t" style="top:90px;font-size:12.36px;left:695px;color:#a1a1a1;letter-spacing:0.02px;">(57.2%)</span>
   <div class="track" style="left:24px;top:112px;width:714px;height:6px;">
    <div class="a" style="left:0px;top:0px;width:714px;height:6px;background:#6b7280;border-radius:3px;"></div>
   </div>
   <span class="t" style="top:126px;font-size:12.36px;left:24px;color:#a1a1a1;letter-spacing:0.05px;">44.1 watch hours</span>
   <span class="t" style="top:168px;font-size:12.36px;right:722px;color:#a1a1a1;">2</span>
   <div class="a" style="left:48px;top:170px;width:8px;height:8px;background:#0a66c2;border-radius:50%;"></div>
   <span class="t" style="top:159px;font-size:14.42px;left:64px;-webkit-text-stroke:0.25px;letter-spacing:0.25px;">LinkedIn</span>
   <span class="t" style="top:178px;font-size:12.36px;left:64px;color:#a1a1a1;letter-spacing:0.25px;">linkedin.com</span>
   <span class="t" style="top:168px;font-size:14.42px;left:664px;-webkit-text-stroke:0.25px;letter-spacing:0.96px;">222</span>
   <span class="t" style="top:170px;font-size:12.36px;left:695.5px;color:#a1a1a1;letter-spacing:-0.08px;">(13.2%)</span>
   <div class="track" style="left:24px;top:198px;width:714px;height:6px;">
    <div class="a" style="left:0px;top:0px;width:165.29px;height:6px;background:#0a66c2;border-radius:3px;"></div>
   </div>
   <span class="t" style="top:212px;font-size:12.36px;left:24px;color:#a1a1a1;letter-spacing:0.01px;">5.1 watch hours</span>
   <span class="t" style="top:248px;font-size:12.36px;right:722px;color:#a1a1a1;">3</span>
   <div class="a" style="left:48px;top:250px;width:8px;height:8px;background:#6b7280;border-radius:50%;"></div>
   <span class="t" style="top:247px;font-size:14.42px;left:64px;-webkit-text-stroke:0.25px;letter-spacing:0.43px;">linkedin.android</span>
   <span class="t" style="top:248px;font-size:14.42px;left:669px;-webkit-text-stroke:0.25px;letter-spacing:0.81px;">164</span>
   <span class="t" style="top:250px;font-size:12.36px;left:700.5px;color:#a1a1a1;letter-spacing:0.28px;">(9.8%)</span>
   <div class="track" style="left:24px;top:272px;width:714px;height:6px;">
    <div class="a" style="left:0px;top:0px;width:122.09px;height:6px;background:#6b7280;border-radius:3px;"></div>
   </div>
   <span class="t" style="top:286px;font-size:12.36px;left:24px;color:#a1a1a1;letter-spacing:0.15px;">2.3 watch hours</span>
   <span class="t" style="top:322px;font-size:12.36px;right:722px;color:#a1a1a1;">4</span>
   <div class="a" style="left:48px;top:324px;width:8px;height:8px;background:#6b7280;border-radius:50%;"></div>
   <span class="t" style="top:321px;font-size:14.42px;left:64px;-webkit-text-stroke:0.25px;letter-spacing:0.55px;">youtube</span>
   <span class="t" style="top:322px;font-size:14.42px;left:677px;-webkit-text-stroke:0.25px;letter-spacing:1.74px;">57</span>
   <span class="t" style="top:324px;font-size:12.36px;left:700px;color:#a1a1a1;letter-spacing:0.38px;">(3.4%)</span>
   <div class="track" style="left:24px;top:346px;width:714px;height:6px;">
    <div class="a" style="left:0px;top:0px;width:42.41px;height:6px;background:#6b7280;border-radius:3px;"></div>
   </div>
   <span class="t" style="top:360px;font-size:12.36px;left:24px;color:#a1a1a1;letter-spacing:0.08px;">1.9 watch hours</span>
   <span class="t" style="top:396px;font-size:12.36px;right:722px;color:#a1a1a1;">5</span>
   <div class="a" style="left:48px;top:398px;width:8px;height:8px;background:#6b7280;border-radius:50%;"></div>
   <span class="t" style="top:395px;font-size:14.42px;left:64px;-webkit-text-stroke:0.25px;letter-spacing:0.46px;">beremoteconsulting.com</span>
   <span class="t" style="top:396px;font-size:14.42px;left:677px;-webkit-text-stroke:0.25px;letter-spacing:1.64px;">40</span>
   <span class="t" style="top:398px;font-size:12.36px;left:700px;color:#a1a1a1;letter-spacing:0.27px;">(2.4%)</span>
   <div class="track" style="left:24px;top:420px;width:714px;height:6px;">
    <div class="a" style="left:0px;top:0px;width:29.77px;height:6px;background:#6b7280;border-radius:3px;"></div>
   </div>
   <span class="t" style="top:434px;font-size:12.36px;left:24px;color:#a1a1a1;letter-spacing:0.08px;">1.4 watch hours</span>
  </section>
 </main>
 <div class="a" style="left:252px;top:923px;width:1589px;height:1px;background:#262626;"></div>
 <button class="fab" style="left:1787px;top:884px;width:56px;height:56px;">
  <svg class="i" width="24" height="24" viewBox="0 0 24 24" fill="none" stroke="#ffffff" stroke-width="2" stroke-linecap="round" stroke-linejoin="round" style="left:16px;top:16px;"><path d="M2.992 16.342a2 2 0 0 1 .094 1.167l-1.065 3.290a1 1 0 0 0 1.236 1.168l3.413-.998a2 2 0 0 1 1.099.092 10 10 0 1 0-4.777-4.719"/></svg>
 </button>
 <div class="strip" style="left:0px;top:938px;width:1841px;height:4px;">
  <div class="a" style="left:92px;top:0px;width:66px;height:4px;background:#323539;"></div>
  <div class="a" style="left:160px;top:0px;width:66px;height:4px;background:#323539;"></div>
  <div class="a" style="left:296px;top:0px;width:67px;height:4px;background:#323539;"></div>
  <div class="a" style="left:364px;top:0px;width:66px;height:4px;background:#3aa3dc;"></div>
  <div class="a" style="left:636px;top:0px;width:66px;height:4px;background:#313438;"></div>
  <div class="a" style="left:1112px;top:0px;width:65px;height:4px;background:#313438;"></div>
 </div>
</div>
</body>
</html>
